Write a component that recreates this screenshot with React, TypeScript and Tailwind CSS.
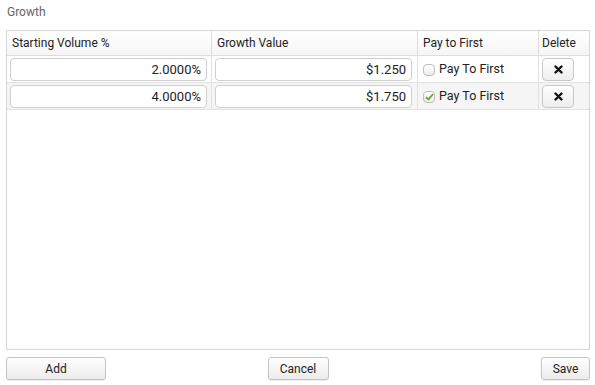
import React, { useState } from "react";

interface GrowthRow {
  volume: string;
  value: string;
  payToFirst: boolean;
}

const initialRows: GrowthRow[] = [
  { volume: "2.0000%", value: "$1.250", payToFirst: false },
  { volume: "4.0000%", value: "$1.750", payToFirst: true },
];

const cols = "grid grid-cols-[205px_206px_121px_1fr]";

const Button: React.FC<{ label: string; className?: string }> = ({ label, className = "" }) => (
  <button
    className={`h-[23px] rounded-[3px] border border-[#c4c4c4] bg-gradient-to-b from-white to-[#ececec] text-[12px] text-[#222] shadow-[0_1px_1px_rgba(0,0,0,0.08)] ${className}`}
  >
    {label}
  </button>
);

const Check: React.FC<{ checked: boolean; onClick: () => void }> = ({ checked, onClick }) => (
  <span
    onClick={onClick}
    className="flex h-[12px] w-[12px] items-center justify-center rounded-[4px] border border-[#bdbdbd] bg-gradient-to-b from-white to-[#ededed]"
  >
    {checked && (
      <svg width="9" height="8" viewBox="0 0 9 8">
        <path d="M1 4.2 L3.4 6.4 L8 1.2" fill="none" stroke="#6aa82e" strokeWidth="1.8" />
      </svg>
    )}
  </span>
);

const inputCls =
  "h-[23px] w-full rounded-[4px] border border-[#cfcfcf] bg-white px-[5px] text-right text-[13px] text-[#222] outline-none";

export default function App() {
  const [rows, setRows] = useState(initialRows);

  const toggle = (i: number) =>
    setRows((r) => r.map((row, j) => (j === i ? { ...row, payToFirst: !row.payToFirst } : row)));

  return (
    <div className="h-[385px] w-[595px] bg-white px-[6px] font-['Roboto',sans-serif] text-[12px] text-[#222]">
      <div className="pl-px pt-[5px] text-[12px] leading-[14px] text-[#666]">Growth</div>

      {/* Grid */}
      <div className="mt-[11px] flex h-[320px] w-[584px] flex-col border border-[#d6d6d6]">
        <div className={`${cols} h-[25px] border-b border-[#dcdcdc] bg-gradient-to-b from-white to-[#f6f6f6]`}>
          <div className="flex items-center border-r border-[#dcdcdc] px-[5px]">Starting Volume %</div>
          <div className="flex items-center border-r border-[#dcdcdc] px-[5px]">Growth Value</div>
          <div className="flex items-center border-r border-[#dcdcdc] px-[5px]">Pay to First</div>
          <div className="flex items-center px-[3px]">Delete</div>
        </div>

        {rows.map((row, i) => (
          <div
            key={i}
            className={`${cols} h-[27px] border-b border-[#e2e2e2] ${i % 2 === 1 ? "bg-[#f5f5f5]" : "bg-white"}`}
          >
            <div className="flex items-center border-r border-[#e2e2e2] pl-[3px] pr-[4px]">
              <input readOnly value={row.volume} className={inputCls} />
            </div>
            <div className="flex items-center border-r border-[#e2e2e2] pl-[3px] pr-[5px]">
              <input readOnly value={row.value} className={inputCls} />
            </div>
            <div className="flex items-center gap-[4px] border-r border-[#e2e2e2] px-[5px] pt-px">
              <Check checked={row.payToFirst} onClick={() => toggle(i)} />
              <span className="text-[12.5px]">Pay To First</span>
            </div>
            <div className="flex items-center px-[3px]">
              <button className="flex h-[23px] w-[32px] items-center justify-center rounded-[4px] border border-[#c8c8c8] bg-gradient-to-b from-white to-[#eeeeee]">
                <svg width="9" height="9" viewBox="0 0 9 9">
                  <path d="M1.5 1.5 L7.5 7.5 M7.5 1.5 L1.5 7.5" stroke="#111" strokeWidth="2.4" strokeLinecap="round" />
                </svg>
              </button>
            </div>
          </div>
        ))}
      </div>

      {/* Footer */}
      <div className="mt-[7px] flex w-[584px] items-center">
        <div className="flex flex-1">
          <Button label="Add" className="w-[100px]" />
        </div>
        <Button label="Cancel" className="w-[61px]" />
        <div className="flex flex-1 justify-end">
          <Button label="Save" className="w-[49px]" />
        </div>
      </div>
    </div>
  );
}
